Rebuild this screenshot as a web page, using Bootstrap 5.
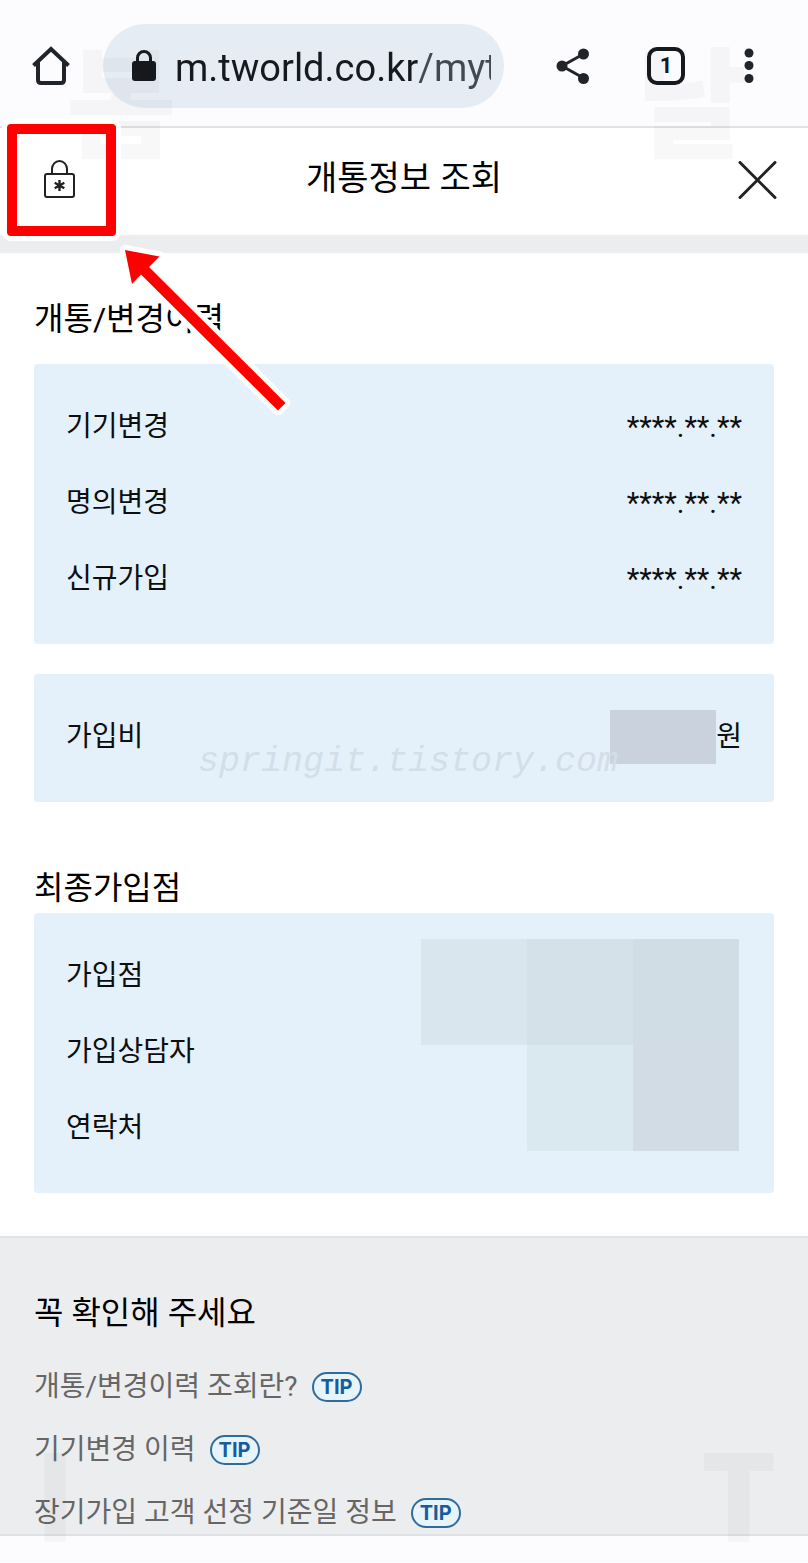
<!DOCTYPE html>
<html lang="ko">
<head>
<meta charset="utf-8">
<meta name="viewport" content="width=device-width, initial-scale=1">
<title>개통정보 조회</title>
<link href="https://cdn.jsdelivr.net/npm/bootstrap@5.3.0/dist/css/bootstrap.min.css" rel="stylesheet">
<style>
  body { font-family: Roboto, "Noto Sans CJK KR", sans-serif; font-size: 28px; line-height: 40px; color: #0c0e10; background: #fff; }
  button { color: inherit; }
  dt { font-weight: inherit; }
  svg { display: block; }

  /* browser toolbar */
  .browser-bar { background: #fcfcff; border-bottom: 2px solid #dfe2e6; padding: 24px 52px 18px 32px; color: #16191d; }
  .url-pill { background: #e6ecf3; border-radius: 42px; height: 84px; margin-left: 33px; margin-right: 52px; padding: 0 13px 0 29px; gap: 19px; min-width: 0; }
  .url-input { font-size: 38px; line-height: 48px; outline: 0; min-width: 0; width: 100%;
    color: #16191d; background: linear-gradient(90deg, #16191d 242px, #414951 242px); -webkit-background-clip: text; background-clip: text; -webkit-text-fill-color: transparent; }
  .bar-actions { gap: 57px; }
  .tab-count { width: 38px; height: 38px; border: 4px solid #16191d; border-radius: 10px; font: 700 22px/30px Roboto, sans-serif; }

  /* page title */
  .title-bar { min-height: 107px; padding: 0 31px 3px; }
  .title-bar h1 { font-size: 34px; line-height: 50px; font-weight: 400; margin-bottom: 4px; color: #000; }
  .side-btn { width: 46px; }
  .divider-band { height: 18px; background: #ecedee; }

  /* information panels */
  .info-area { padding: 42px 34px 43px; }
  .sec-title { font-size: 32px; line-height: 48px; font-weight: 400; color: #000; }
  .first-title { margin-bottom: 21px; }
  .next-title { margin-top: 62px; margin-bottom: 1px; }
  .panel { background: #e4f1fb; border-radius: 4px; padding: 25px 32px 27px; }
  .panel-single { margin-top: 30px; }
  .panel-single { padding-bottom: 27px; }
  .panel-row { height: 76px; }
  .masked-date { font-size: 29px; }
  .hidden-amount { width: 106px; height: 54px; background: #cad3dd; }
  .mosaic { top: 26px; right: 35px; display: grid; grid-template-columns: repeat(3, 106px); grid-auto-rows: 106px; }
  .m1 { background: #d9e6ee; } .m2 { background: #d5e1e9; } .m3 { background: #d0dde5; }
  .m4 { background: #dae8ef; } .m5 { background: #d2dce5; }

  /* notice */
  .notice { background: #ecedef; border-top: 2px solid #e0e2e4; border-bottom: 2px solid #dfe1e5; padding: 51px 34px 1px; }
  .notice-title { margin-bottom: 30px; }
  .notice ul { gap: 23px; }
  .notice li { gap: 14px; color: #666; }
  .tip-btn { width: 50px; height: 30px; padding: 0; border: 2px solid #2f6c9e; border-radius: 15px; background: #e8f4fc; color: #175c9c; font: 700 20px/26px Inter, sans-serif; }
  .nav-strip { height: 26px; background: #fcfcff; }

  /* overlays */
  .overlay { pointer-events: none; z-index: 5; }
  .mark-url { font: italic 400 35px/48px "Liberation Mono", monospace; color: #d3dee7; left: 8px; right: 0; top: 64px; }
  .mark-big { font-family: "Noto Sans CJK KR", sans-serif; font-size: 120px; line-height: 120px; font-weight: 900; color: rgba(0, 0, 0, .028); }
  .mark-bom { left: 66px; top: 37px; }
  .mark-nal { right: 61px; top: 37px; }
  .mark-i { left: 34px; bottom: -16px; }
  .mark-t { right: 31px; bottom: -16px; }
  .focus-box { left: 7px; top: 124px; width: 109px; height: 112px; border: 10px solid #f00; border-radius: 4px; box-shadow: 0 0 0 5px #fff; }
  .arrow { left: 116px; top: 240px; }
</style>
</head>
<body>
<div class="position-relative">
  <nav class="browser-bar d-flex align-items-center" aria-label="브라우저">
    <button class="btn border-0 p-0" aria-label="홈">
      <svg width="38" height="42" viewBox="0 0 38 42" fill="none" stroke="currentColor" stroke-width="4"><path d="M1.500 20.500 19 4l17.500 16.500M6 17v18q0 3 3 3h20q3 0 3-3V17"/></svg>
    </button>
    <div class="url-pill d-flex align-items-center flex-grow-1">
      <svg class="flex-shrink-0" width="24" height="32" viewBox="0 0 24 32"><rect x="0" y="11" width="24" height="20" rx="3" fill="currentColor"/><path d="M5.500 12V8a6.500 6.500 0 0 1 13 0v4" fill="none" stroke="currentColor" stroke-width="3"/></svg>
      <input class="url-input border-0 p-0 pt-1" type="text" aria-label="주소" value="m.tworld.co.kr/mytworld">
    </div>
    <div class="bar-actions d-flex align-items-center">
      <button class="btn border-0 p-0" aria-label="공유">
        <svg width="34" height="36" viewBox="0 0 34 36" fill="currentColor"><path d="M27.500 6 6 18l21.500 12" fill="none" stroke="currentColor" stroke-width="3"/><circle cx="6" cy="18" r="5.500"/><circle cx="27.500" cy="6" r="5.500"/><circle cx="27.500" cy="30.500" r="5.500"/></svg>
      </button>
      <button class="tab-count bg-transparent p-0" aria-label="탭">1</button>
      <button class="btn border-0 p-0" aria-label="메뉴">
        <svg width="14" height="36" viewBox="0 0 14 36" fill="currentColor"><circle cx="7" cy="5" r="4.500"/><circle cx="7" cy="17.500" r="4.500"/><circle cx="7" cy="30.500" r="4.500"/></svg>
      </button>
    </div>
  </nav>

  <header class="title-bar d-flex align-items-center">
    <button class="side-btn btn border-0 p-0 d-flex justify-content-end" aria-label="잠금 해제">
      <svg width="34" height="42" viewBox="0 0 34 42" fill="none" stroke="#222" stroke-width="2"><rect x="2" y="15" width="29" height="23" rx="2"/><path d="M9 15V10a7.500 8 0 0 1 15 0v5"/><path d="M16.500 21v11M11.700 23.800l9.600 5.400M21.300 23.800l-9.600 5.400" stroke-width="2.400"/></svg>
    </button>
    <h1 class="flex-grow-1 text-center">개통정보 조회</h1>
    <button class="side-btn btn border-0 p-0 d-flex justify-content-end" aria-label="닫기">
      <svg width="39" height="38" viewBox="0 0 39 38" fill="none" stroke="#222" stroke-width="3" stroke-linecap="round"><path d="m2 1.500 35 35M37 1.500l-35 35"/></svg>
    </button>
  </header>
  <div class="divider-band"></div>

  <main>
    <div class="info-area">
      <h2 class="sec-title first-title">개통/변경이력</h2>
      <dl class="panel mb-0">
        <div class="panel-row d-flex align-items-center justify-content-between"><dt>기기변경</dt><dd class="masked-date mb-0">****.**.**</dd></div>
        <div class="panel-row d-flex align-items-center justify-content-between"><dt>명의변경</dt><dd class="masked-date mb-0">****.**.**</dd></div>
        <div class="panel-row d-flex align-items-center justify-content-between"><dt>신규가입</dt><dd class="masked-date mb-0">****.**.**</dd></div>
      </dl>
      <dl class="panel panel-single mb-0 position-relative">
        <div class="panel-row d-flex align-items-center justify-content-between"><dt>가입비</dt><dd class="mb-0 d-flex align-items-center"><span class="hidden-amount"></span>원</dd></div>
        <div class="mark-url overlay position-absolute text-center" aria-hidden="true">springit.tistory.com</div>
      </dl>
      <h2 class="sec-title next-title">최종가입점</h2>
      <dl class="panel mb-0 position-relative">
        <div class="panel-row d-flex align-items-center"><dt>가입점</dt></div>
        <div class="panel-row d-flex align-items-center"><dt>가입상담자</dt></div>
        <div class="panel-row d-flex align-items-center"><dt>연락처</dt></div>
        <div class="mosaic position-absolute" aria-hidden="true">
          <span class="m1"></span><span class="m2"></span><span class="m3"></span>
          <span></span><span class="m4"></span><span class="m5"></span>
        </div>
      </dl>
    </div>

    <section class="notice position-relative">
      <h2 class="sec-title notice-title">꼭 확인해 주세요</h2>
      <ul class="list-unstyled mb-0 d-flex flex-column">
        <li class="d-flex align-items-center"><span>개통/변경이력 조회란?</span><button class="tip-btn">TIP</button></li>
        <li class="d-flex align-items-center"><span>기기변경 이력</span><button class="tip-btn">TIP</button></li>
        <li class="d-flex align-items-center"><span>장기가입 고객 선정 기준일 정보</span><button class="tip-btn">TIP</button></li>
      </ul>
      <div class="mark-big mark-i overlay position-absolute" aria-hidden="true">I</div>
      <div class="mark-big mark-t overlay position-absolute" aria-hidden="true">T</div>
    </section>
  </main>
  <div class="nav-strip"></div>

  <div class="mark-big mark-bom overlay position-absolute" aria-hidden="true">봄</div>
  <div class="mark-big mark-nal overlay position-absolute" aria-hidden="true">날</div>
  <div class="focus-box overlay position-absolute"></div>
  <svg class="arrow overlay position-absolute" width="180" height="180" viewBox="116 240 180 180" aria-hidden="true"><path d="M125 250 159.500 256.500 149 267 285.500 403 278 410.500 141 274.500 132 284Z" fill="#f00" stroke="#fff" stroke-width="10" stroke-linejoin="round" paint-order="stroke"/></svg>
</div>
<script src="https://cdn.jsdelivr.net/npm/bootstrap@5.3.0/dist/js/bootstrap.bundle.min.js"></script>
</body>
</html>
